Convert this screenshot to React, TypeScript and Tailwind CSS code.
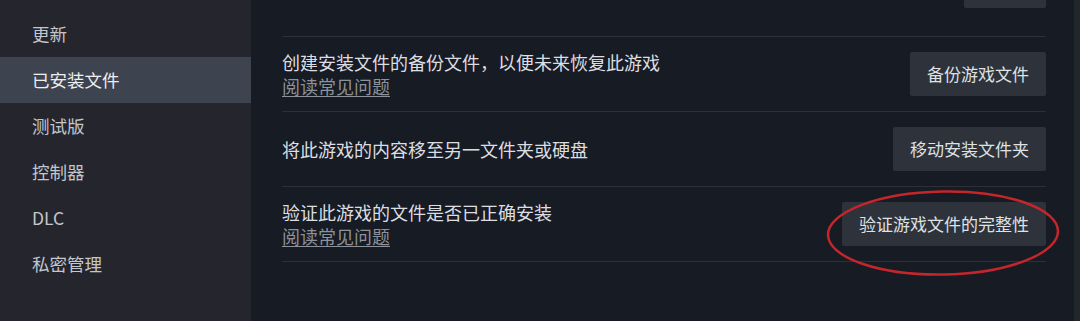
const sideItems = ["更新", "已安装文件", "测试版", "控制器", "DLC", "私密管理"];

const rows = [
  { text: "创建安装文件的备份文件，以便未来恢复此游戏", faq: true, button: "备份游戏文件" },
  { text: "将此游戏的内容移至另一文件夹或硬盘", faq: false, button: "移动安装文件夹" },
  { text: "验证此游戏的文件是否已正确安装", faq: true, button: "验证游戏文件的完整性" },
];

function Row({ text, faq, button }: { text: string; faq: boolean; button: string }) {
  return (
    <div className="flex h-[75px] items-center justify-between border-b border-[#2c3139]">
      <div className="flex flex-col leading-[24px]">
        <span className="text-[18px] text-[#dcdee2]">{text}</span>
        {faq && <span className="text-[18px] text-[#8d9199] underline underline-offset-2">阅读常见问题</span>}
      </div>
      <button className="h-[44px] rounded-[2px] bg-[#2d323b] px-[17px] text-[17px] text-[#dfe1e4]">{button}</button>
    </div>
  );
}

export default function App() {
  return (
    <div
      className="flex h-[321px] w-[1080px] overflow-hidden bg-[#171b23]"
      style={{ fontFamily: '"Noto Sans CJK SC", "Noto Sans", sans-serif' }}
    >
      <aside className="w-[251px] shrink-0 bg-[#25262d] pt-[11px]">
        {sideItems.map((item) => (
          <div
            key={item}
            className={
              item === "已安装文件"
                ? "flex h-[46px] items-center bg-[#3e4350] pl-[32px] text-[17.5px] text-[#eceef0]"
                : "flex h-[46px] items-center pl-[32px] text-[17.5px] text-[#c3c6cc]"
            }
          >
            {item}
          </div>
        ))}
      </aside>

      <main className="relative flex-1 pl-[31px] pr-[28px]">
        <div className="flex h-[37px] justify-end border-b border-[#2c3139]">
          <div className="-mt-[36px] h-[44px] w-[82px] rounded-[2px] bg-[#2d323b]" />
        </div>
        {rows.map((r) => (
          <Row key={r.text} {...r} />
        ))}

        <svg className="pointer-events-none absolute left-[574px] top-[189px]" width="236" height="90" viewBox="0 0 236 90">
          <ellipse cx="118" cy="44" rx="115" ry="41.5" fill="none" stroke="#c4262c" strokeWidth="2.5" transform="rotate(-1 118 44)" />
        </svg>
      </main>
      <div className="w-[6px] shrink-0 bg-[#22262d]" />
    </div>
  );
}
